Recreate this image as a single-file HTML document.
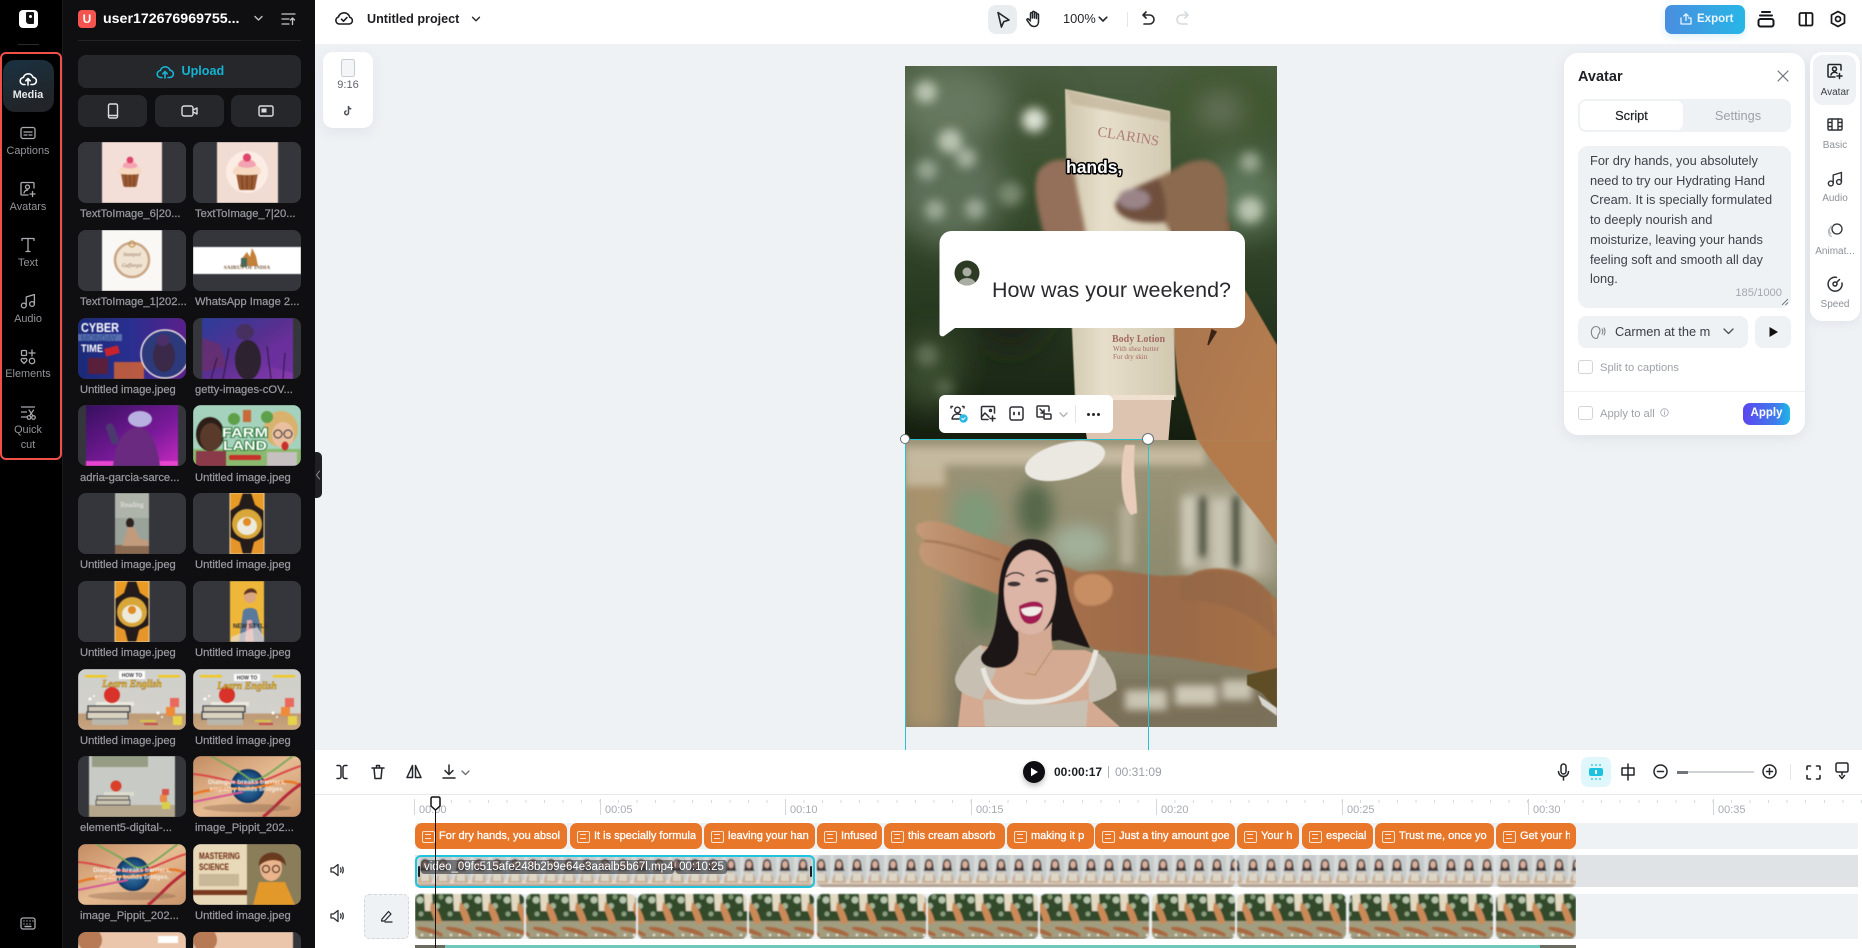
<!DOCTYPE html>
<html><head><meta charset="utf-8"><title>Editor</title>
<style>
*{box-sizing:border-box}
html,body{margin:0;padding:0;width:1862px;height:948px;overflow:hidden;background:#fff;font-family:"Liberation Sans",sans-serif}
.a{position:absolute}
svg{display:block;overflow:visible}
.i{position:absolute;fill:none;stroke:currentColor;stroke-width:1.6;stroke-linecap:round;stroke-linejoin:round}
.rl{position:absolute;left:0;width:56px;text-align:center;font-size:10.9px;color:#93959a;line-height:14px;white-space:nowrap}
.tile{position:absolute;width:108px;height:61px;border-radius:8px;background:#35363b;overflow:hidden}
.tile svg{width:108px;height:61px;filter:blur(.45px)}
.lb{position:absolute;font-size:11.2px;font-weight:500;color:#96979c;line-height:14px;white-space:nowrap;-webkit-text-stroke:.25px #96979c}
.cap{position:absolute;top:823px;height:26px;background:#e8772a;border-radius:7px;overflow:hidden;color:#fff;font-size:11px;line-height:26px;padding-left:24px;white-space:nowrap;-webkit-text-stroke:.3px #fff}
.cap:before{content:"";position:absolute;left:7px;top:8px;width:11px;height:10px;border:1.2px solid #fde3cf;border-radius:2px}
.cap:after{content:"";position:absolute;left:10px;top:11px;width:6px;height:3px;border-top:1px solid #fde3cf;border-bottom:1px solid #fde3cf}
.cap span{display:block;overflow:hidden;height:26px}
.tm{position:absolute;top:803px;font-size:11px;color:#a6abb2;line-height:14px}
.mj{position:absolute;top:799px;width:1px;height:16px;background:#d4d7db}
.rr{position:absolute;left:1810px;width:50px;text-align:center;font-size:10px;color:#8d9198;line-height:12px;white-space:nowrap}
.ln{position:absolute;left:1590px;font-size:12.8px;color:#3d424a;line-height:20px;white-space:nowrap}
</style></head><body>

<!-- canvas -->
<div class="a" style="left:315px;top:44px;width:1547px;height:706px;background:#eff2f5"></div>

<!-- top bar -->
<div class="a" style="left:315px;top:0;width:1547px;height:44px;background:#fff"></div>
<svg class="i" style="left:334px;top:8px;color:#1a1c20" width="20" height="20" viewBox="0 0 20 20"><path d="M5 16h10a3.4 3.4 0 0 0 .8-6.7A5.9 5.9 0 0 0 4.400 9 3.600 3.600 0 0 0 5 16Z"/><path d="m7.500 11.200 2 2 3.400-3.600"/></svg>
<div class="a" style="left:367px;top:11px;font-size:12.6px;font-weight:700;color:#1c1e22;line-height:16px;white-space:nowrap">Untitled project</div>
<svg class="i" style="left:471px;top:16px;color:#2a2c30;stroke-width:1.400" width="10" height="7" viewBox="0 0 10 7"><path d="m1.500 1.200 3.500 3.600 3.500-3.600"/></svg>

<div class="a" style="left:988px;top:5px;width:29px;height:29px;background:#e9edf0;border-radius:8px"></div>
<svg class="i" style="left:994px;top:10px;color:#22252a" width="18" height="20" viewBox="0 0 18 20"><path d="M4 2.500 15 10l-5.200 1.600L7.400 17 4 2.500Z"/></svg>
<svg class="i" style="left:1025px;top:10px;color:#22252a;stroke-width:1.500" width="18" height="18" viewBox="0 0 18 18"><path d="M5.500 9V3.600a1 1 0 0 1 2 0V8m0-5.600a1 1 0 0 1 2 0V8m0-4.600a1 1 0 0 1 2 0V8.500m0-3.600a1 1 0 0 1 2 0v6.600c0 3-1.800 5-4.500 5-2.600 0-3.800-1.300-5-3.600L2 10.200c-.5-1 .7-1.900 1.600-1l1.900 1.800"/></svg>
<div class="a" style="left:1063px;top:11px;font-size:12.800px;color:#23262b;line-height:16px">100%</div>
<svg class="i" style="left:1098px;top:16px;color:#23262b" width="10" height="7" viewBox="0 0 10 7"><path d="m1.200 1.200 3.800 3.800 3.800-3.800"/></svg>
<div class="a" style="left:1127px;top:12px;width:1px;height:15px;background:#e3e6e9"></div>
<svg class="i" style="left:1140px;top:10px;color:#23262b" width="16" height="18" viewBox="0 0 16 18"><path d="M6 2 3 5l3 3M3 5h6.500a4.500 4.500 0 0 1 0 9H4"/></svg>
<svg class="i" style="left:1175px;top:10px;color:#d5dade" width="16" height="18" viewBox="0 0 16 18"><path d="m10 2 3 3-3 3m3-3H6.500a4.500 4.500 0 0 0 0 9H12"/></svg>

<div class="a" style="left:1665px;top:5px;width:80px;height:29px;border-radius:7px;background:linear-gradient(90deg,#4a8ee0,#27b6e6);box-shadow:0 3px 8px rgba(60,170,230,.18)"></div>
<svg class="i" style="left:1679px;top:12px;color:#e6f4fd;stroke-width:1.300" width="14" height="14" viewBox="0 0 14 14"><path d="M2 6v6h10V6H9.500M7 8.500V2M4.800 4 7 1.800 9.200 4"/></svg>
<div class="a" style="left:1697px;top:11px;font-size:11.500px;font-weight:700;color:#eaf6fe;line-height:16px">Export</div>
<svg class="i" style="left:1757px;top:10px;color:#15171a;stroke-width:2" width="18" height="18" viewBox="0 0 18 18"><path d="M5 2h8M3 5.500h12"/><rect x="1.500" y="9" width="15" height="7.500" rx="2"/></svg>
<svg class="i" style="left:1798px;top:11px;color:#15171a;stroke-width:1.800" width="16" height="16" viewBox="0 0 16 16"><rect x="1.500" y="2" width="13" height="12.500" rx="1.500"/><path d="M8 2v12.500"/></svg>
<svg class="i" style="left:1830px;top:10px;color:#15171a;stroke-width:1.700" width="16" height="18" viewBox="0 0 16 18"><path d="M8 1.500 14.500 5v8L8 16.500 1.500 13V5L8 1.500Z"/><circle cx="8" cy="9" r="2.500"/></svg>

<!-- format card -->
<div class="a" style="left:323px;top:52px;width:50px;height:76px;background:#fff;border-radius:10px;box-shadow:0 4px 14px rgba(60,70,90,.08)"></div>
<div class="a" style="left:341px;top:59px;width:14px;height:18px;border:1.500px solid #c6ccd3;border-radius:2.500px;background:#f3f5f7"></div>
<div class="a" style="left:323px;top:79px;width:50px;text-align:center;font-size:11px;color:#5f646c;line-height:13px">9:16</div>
<svg class="a" style="left:342px;top:105px" width="12" height="12" viewBox="0 0 12 12"><path d="M6.500 1v6.800a1.900 1.900 0 1 1-1.900-1.900M6.500 1.200c.2 1.600 1.300 2.600 2.800 2.800" fill="none" stroke="#4e525a" stroke-width="1.500"/></svg>

<!-- video -->
<svg class="a" style="left:905px;top:66px;overflow:hidden" width="372" height="661" viewBox="905 66 372 661">
<defs>
<filter id="b12" x="-40%" y="-40%" width="180%" height="180%"><feGaussianBlur stdDeviation="14"/></filter>
<filter id="b8" x="-30%" y="-30%" width="160%" height="160%"><feGaussianBlur stdDeviation="8"/></filter>
<filter id="b5" x="-50%" y="-50%" width="200%" height="200%"><feGaussianBlur stdDeviation="5"/></filter>
<filter id="b4" x="-30%" y="-30%" width="160%" height="160%"><feGaussianBlur stdDeviation="4"/></filter>
<filter id="b2" x="-20%" y="-20%" width="140%" height="140%"><feGaussianBlur stdDeviation="2.500"/></filter>
<filter id="b1" x="-10%" y="-10%" width="120%" height="120%"><feGaussianBlur stdDeviation="1"/></filter>
<filter id="b0" x="-5%" y="-5%" width="110%" height="110%"><feGaussianBlur stdDeviation=".6"/></filter>
<linearGradient id="gtop" x1="0" y1="0" x2="0" y2="1"><stop offset="0" stop-color="#4b5e42"/><stop offset=".3" stop-color="#3b5030"/><stop offset=".65" stop-color="#263820"/><stop offset="1" stop-color="#141c0e"/></linearGradient>
<linearGradient id="tube" x1="0" y1="0" x2="1" y2="0"><stop offset="0" stop-color="#cfc6ac"/><stop offset=".35" stop-color="#e6dfca"/><stop offset="1" stop-color="#d2c8b0"/></linearGradient>
<linearGradient id="arm" x1="0" y1="0" x2="1" y2="1"><stop offset="0" stop-color="#a87650"/><stop offset="1" stop-color="#bb7f4e"/></linearGradient>
<linearGradient id="low" x1="0" y1="0" x2="0" y2="1"><stop offset="0" stop-color="#9c9478"/><stop offset=".5" stop-color="#8c8a6e"/><stop offset="1" stop-color="#7f7862"/></linearGradient>
<linearGradient id="palm" x1="0" y1="0" x2="1" y2="0"><stop offset="0" stop-color="#c49a78"/><stop offset=".35" stop-color="#a8704c"/><stop offset=".7" stop-color="#9a6a48"/><stop offset="1" stop-color="#a67045"/></linearGradient>
</defs>
<rect x="905" y="66" width="372" height="380" fill="url(#gtop)"/>
<g filter="url(#b12)">
<ellipse cx="950" cy="105" rx="55" ry="40" fill="#66785e"/><ellipse cx="1225" cy="105" rx="60" ry="40" fill="#40562f"/><ellipse cx="1245" cy="195" rx="40" ry="40" fill="#5d7658"/><ellipse cx="950" cy="190" rx="55" ry="55" fill="#5d7059"/><ellipse cx="930" cy="370" rx="30" ry="40" fill="#3b4e2e"/><ellipse cx="1040" cy="110" rx="30" ry="30" fill="#435434"/>
<ellipse cx="1010" cy="300" rx="40" ry="50" fill="#1a2414"/><ellipse cx="1220" cy="110" rx="20" ry="12" fill="#75806a"/>
</g>
<g filter="url(#b5)" fill="#b9c4b0">
<circle cx="926" cy="92" r="11"/><circle cx="1034" cy="120" r="12" fill="#dce2d4"/><circle cx="950" cy="141" r="12"/><circle cx="966" cy="158" r="10" opacity=".8"/><circle cx="927" cy="170" r="10" opacity=".65"/><circle cx="935" cy="210" r="10" opacity=".7"/><circle cx="975" cy="209" r="10" opacity=".7"/><circle cx="1011" cy="194" r="12" opacity=".45"/><circle cx="1250" cy="162" r="10" opacity=".7"/><circle cx="1250" cy="210" r="13"/><circle cx="1215" cy="205" r="10" opacity=".35"/><circle cx="927" cy="355" r="11" opacity=".3"/><circle cx="945" cy="388" r="9" opacity=".25"/>
</g>
<!-- arm upper -->
<path d="M1172 318 1245 290 1277 345V545L1240 500 1198 445 1178 380Z" fill="url(#arm)" filter="url(#b0)"/>
<path d="M1212 330 1208 345 1216 332Z" fill="#3a2416" stroke="#3a2416" stroke-width="1.500"/>
<rect x="1175" y="222" width="55" height="14" fill="#7c5a42" filter="url(#b1)"/>
<!-- tube -->
<path d="M1065 89 1170 111 1172 250 1176 397 1075 397 1068 240Z" fill="url(#tube)" filter="url(#b0)"/>
<path d="M1066 90 1170 112 1170 122 1072 104Z" fill="#c2b49a" opacity=".7" filter="url(#b1)"/>
<path d="M1080 397H1172L1168 445H1088Z" fill="#dcc4b0"/>
<rect x="1077" y="395" width="97" height="5" fill="#efe0cf"/>
<text x="1097" y="136" font-family="Liberation Serif,serif" font-size="14.500" fill="#b07e78" transform="rotate(9 1097 136)">CLARINS</text>
<text x="1112" y="342" font-family="Liberation Serif,serif" font-size="10" font-weight="700" fill="#a36a62">Body Lotion</text>
<text x="1113" y="351" font-family="Liberation Serif,serif" font-size="7" fill="#a36a62">With shea butter</text>
<text x="1113" y="359" font-family="Liberation Serif,serif" font-size="7" fill="#a36a62">For dry skin</text>
<!-- upper hand -->
<g filter="url(#b2)">
<path d="M1038 172C1046 160 1062 157 1073 162 1078 200 1082 210 1086 235H1044C1038 210 1032 190 1038 172Z" fill="#94705a"/>
<path d="M1115 205C1118 190 1160 180 1182 165 1205 155 1220 160 1226 182 1228 200 1226 220 1228 235H1172L1165 222C1145 224 1118 222 1115 205Z" fill="#8c6a50"/>
<path d="M1115 205C1118 192 1140 186 1158 178 1165 190 1168 210 1165 222 1145 224 1118 222 1115 205Z" fill="#6f4f3e"/>
<ellipse cx="1134" cy="199" rx="16" ry="10" fill="#9a8488"/>
</g>
<!-- lower -->
<rect x="905" y="440" width="372" height="287" fill="url(#low)"/>
<g filter="url(#b8)">
<rect x="905" y="470" width="40" height="260" fill="#a8926c"/>
<ellipse cx="975" cy="520" rx="24" ry="30" fill="#7f9a78"/><ellipse cx="1035" cy="510" rx="18" ry="28" fill="#55684a"/>
<ellipse cx="1080" cy="545" rx="28" ry="20" fill="#a2b09a"/><ellipse cx="985" cy="600" rx="18" ry="35" fill="#6b7a58"/>
<rect x="1185" y="490" width="90" height="90" fill="#b2ad98"/>
<rect x="960" y="680" width="320" height="50" fill="#7a7058"/>
</g>
<g filter="url(#b4)">
<rect x="905" y="447" width="300" height="18" fill="#c5baa0"/>
<rect x="905" y="464" width="40" height="22" fill="#c4b79c"/>
<rect x="1182" y="497" width="14" height="70" fill="#cbc7b5"/><rect x="1212" y="500" width="16" height="72" fill="#c8c4b2"/><rect x="1244" y="500" width="14" height="72" fill="#c5c2ae"/>
<rect x="1125" y="690" width="42" height="20" fill="#c9c4b2"/><rect x="1175" y="685" width="42" height="20" fill="#cdc8b6"/><rect x="1222" y="680" width="30" height="20" fill="#c9c4b2"/>
<rect x="1120" y="505" width="14" height="60" fill="#b4ae96"/>
<rect x="1198" y="497" width="8" height="60" fill="#35402c"/><rect x="1232" y="497" width="8" height="70" fill="#35402c"/>
</g>
<!-- arm lower upper corner -->
<path d="M1198 440H1277V545C1255 510 1215 470 1198 440Z" fill="#b37a4c" filter="url(#b0)"/>
<!-- lid drip -->
<ellipse cx="1065" cy="461" rx="41" ry="18" transform="rotate(-14 1065 461)" fill="#ebe8e2" filter="url(#b0)"/>
<path d="M1125 445H1135C1132 470 1137 495 1137 513L1131 515C1122 505 1118 478 1125 445Z" fill="#e9cdbb" filter="url(#b0)"/>
<!-- lower hand -->
<g filter="url(#b1)">
<path d="M918 524C932 518 945 522 968 532L1020 550 1080 572 1115 570 1160 576 1190 575C1205 565 1240 565 1262 585L1277 600V676L1240 668 1180 658 1120 652 1095 650 1060 620 1040 590 1000 595 960 580 926 565C918 558 916 546 925 540 915 534 914 528 918 524Z" fill="url(#palm)"/>
<path d="M924 541C945 541 975 552 1000 560" stroke="#8d6246" stroke-width="1.500" fill="none"/>
<path d="M1075 582C1085 570 1105 572 1112 585 1116 600 1100 608 1085 605 1075 602 1072 592 1075 582Z" fill="#c88e64"/>
<path d="M1180 580C1210 565 1245 568 1270 592L1277 640C1250 610 1215 600 1180 600Z" fill="#8a6248" opacity=".35"/>
</g>
<path d="M1247 675 1277 668V710L1262 693 1247 685Z" fill="#5e4e28" filter="url(#b0)"/>
<path d="M1258 695 1277 708V716L1262 705Z" fill="#d8d6d0" filter="url(#b0)"/>
<!-- woman -->
<g filter="url(#b0)">
<path d="M961 665 980 645 1000 650 1085 650 1105 658 1117 690 1092 702 1120 727H958L962 690Z" fill="#d4ab92"/>
<path d="M980 645C965 655 955 672 955 680 956 692 965 695 982 700 985 690 992 682 996 670 990 660 985 650 980 645Z" fill="#c7bfb2"/>
<path d="M1094 650C1110 660 1118 680 1116 690 1108 698 1100 700 1090 703 1087 690 1090 660 1094 650Z" fill="#c7bfb2"/>
<path d="M983 700 985 727H1086L1088 700C1070 702 1050 706 1030 704 1010 703 995 698 983 700Z" fill="#c8c1b3"/>
<path d="M983 668C988 690 998 702 1030 702 1065 702 1088 690 1096 650" fill="none" stroke="#e8e6df" stroke-width="5"/>
<path d="M1030 539C1010 540 1001 562 999 588 997 618 996 640 984 652 976 660 985 668 995 668 1012 668 1018 658 1020 645L1060 640 1090 648C1080 625 1070 608 1067 585 1062 552 1050 539 1030 539Z" fill="#1c1719"/>
<path d="M1004 592C1004 568 1014 552 1030 550 1046 552 1057 568 1056 590 1056 615 1046 636 1030 637 1014 636 1004 615 1004 592Z" fill="#dcb5a6"/>
<path d="M1018 628C1020 650 1018 660 1010 665L1060 665C1052 655 1050 640 1052 622 1045 634 1025 640 1018 628Z" fill="#d3a994"/>
<path d="M1019 606C1030 600 1040 600 1043 606 1043 620 1036 624 1030 624 1024 624 1019 618 1019 606Z" fill="#a31f52"/>
<path d="M1021 609C1030 606 1038 606 1042 608 1040 615 1034 616 1030 616 1026 616 1022 615 1021 609Z" fill="#f2ece8"/>
<ellipse cx="1014" cy="584" rx="6.500" ry="2.500" fill="#3d3238"/><ellipse cx="1042" cy="580" rx="6.500" ry="2.500" fill="#3d3238"/>
<path d="M1006 577C1012 571 1020 572 1024 576M1036 574C1042 569 1050 570 1054 574" fill="none" stroke="#2e2426" stroke-width="1.600"/>
<path d="M1025 673 1035 675 1055 645" fill="none" stroke="#a98a50" stroke-width=".8"/>
</g>
<!-- caption -->
<text x="1066" y="173" font-family="Liberation Sans,sans-serif" font-weight="700" font-size="17.500" fill="#fff" stroke="#000" stroke-width="3" paint-order="stroke" stroke-linejoin="round">hands,</text>
</svg>

<!-- bubble -->
<svg class="a" style="left:930px;top:225px" width="320" height="120" viewBox="930 225 320 120">
<path d="M952 231H1233a12 12 0 0 1 12 12V316a12 12 0 0 1-12 12H955L944 336a3 3 0 0 1-4.500-2.500L939.500 243a12 12 0 0 1 12.500-12Z" fill="#fff"/>
<clipPath id="cc"><circle cx="967" cy="273" r="12.500"/></clipPath>
<circle cx="967" cy="273" r="12.500" fill="#2d3a24"/>
<g clip-path="url(#cc)"><circle cx="967" cy="272" r="4.500" fill="#a9ada2"/><ellipse cx="967" cy="285" rx="9" ry="7" fill="#a9ada2"/></g>
<text x="992" y="297" font-family="Liberation Sans,sans-serif" font-size="21.500" fill="#2a2a2e">How was your weekend?</text>
</svg>

<!-- selection -->
<div class="a" style="left:905px;top:439px;width:244px;height:1px;background:#29c0d0"></div>
<div class="a" style="left:904.500px;top:439px;width:1px;height:311px;background:#29c0d0"></div>
<div class="a" style="left:1147.500px;top:439px;width:1px;height:311px;background:#29c0d0"></div>
<div class="a" style="left:900px;top:434px;width:10px;height:10px;border-radius:50%;background:#fff;border:1px solid #6a7176"></div>
<div class="a" style="left:1142px;top:433px;width:12px;height:12px;border-radius:50%;background:#fff;border:1px solid #6a7176"></div>

<!-- floating toolbar -->
<div class="a" style="left:939px;top:395px;width:174px;height:38px;background:#fff;border-radius:6px"></div>
<svg class="i" style="left:950px;top:405px;color:#2b2e33;stroke-width:1.400" width="18" height="18" viewBox="0 0 18 18"><circle cx="7.500" cy="5" r="2.800"/><path d="M2 14c.5-3.500 3-5 5.500-5s3.500.7 4.500 2M2 14h7M1 3v-1.500h1.500M14 3V1.500h-1.500"/><circle cx="13.500" cy="13.500" r="3.500" fill="#29b8e6" stroke="#29b8e6"/><path d="m11.800 13.500 1.300 1.200 2-2" stroke="#fff" stroke-width="1"/></svg>
<svg class="i" style="left:980px;top:405px;color:#2b2e33;stroke-width:1.500" width="17" height="17" viewBox="0 0 17 17"><path d="M14.500 8V2.500a1 1 0 0 0-1-1h-11a1 1 0 0 0-1 1v11a1 1 0 0 0 1 1H8"/><circle cx="10.500" cy="5.500" r="1"/><path d="m1.500 12 3.500-4 4 4M12.500 11v5M10 13.500h5"/></svg>
<svg class="i" style="left:1009px;top:406px;color:#2b2e33;stroke-width:1.500" width="15" height="15" viewBox="0 0 15 15"><rect x="1" y="1" width="13" height="13" rx="2"/><path d="M5 6.500v2M10 6.500v2" stroke-width="1.800"/></svg>
<svg class="i" style="left:1036px;top:405px;color:#2b2e33;stroke-width:1.500" width="16" height="16" viewBox="0 0 16 16"><path d="M7 12H2a1 1 0 0 1-1-1V2a1 1 0 0 1 1-1h10a1 1 0 0 1 1 1v4"/><path d="m4 4 4 4M8 5v3H5"/><rect x="8" y="9" width="7" height="5" rx="1"/></svg>
<svg class="i" style="left:1059px;top:412px;color:#aab0b6;stroke-width:1.300" width="9" height="6" viewBox="0 0 9 6"><path d="m1 1 3.500 3.500L8 1"/></svg>
<div class="a" style="left:1075px;top:405px;width:1px;height:18px;background:#e4e6e9"></div>
<div class="a" style="left:1087px;top:413px;width:3px;height:3px;border-radius:50%;background:#26282c;box-shadow:5px 0 0 #26282c,10px 0 0 #26282c"></div>

<!-- avatar panel -->
<div class="a" style="left:1564px;top:53px;width:241px;height:382px;background:#fff;border-radius:14px;box-shadow:0 3px 14px rgba(70,80,100,.1)"></div>
<div class="a" style="left:1578px;top:68px;font-size:14.500px;font-weight:700;color:#1d2025;line-height:18px">Avatar</div>
<svg class="i" style="left:1777px;top:70px;color:#6f747b;stroke-width:1.200" width="12" height="12" viewBox="0 0 12 12"><path d="m1 1 10 10M11 1 1 11"/></svg>
<div class="a" style="left:1578px;top:99px;width:213px;height:33px;background:#eff2f5;border-radius:8px"></div>
<div class="a" style="left:1580px;top:101px;width:103px;height:29px;background:#fff;border-radius:6px"></div>
<div class="a" style="left:1580px;top:108px;width:103px;text-align:center;font-size:12.800px;font-weight:500;color:#1d2025;line-height:16px;-webkit-text-stroke:.2px #1d2025">Script</div>
<div class="a" style="left:1685px;top:108px;width:106px;text-align:center;font-size:12.800px;color:#9da2a9;line-height:16px">Settings</div>
<div class="a" style="left:1578px;top:146px;width:213px;height:162px;background:#eff2f5;border-radius:10px"></div>
<div class="ln" style="top:151px">For dry hands, you absolutely</div>
<div class="ln" style="top:171px">need to try our Hydrating Hand</div>
<div class="ln" style="top:190px">Cream. It is specially formulated</div>
<div class="ln" style="top:210px">to deeply nourish and</div>
<div class="ln" style="top:230px">moisturize, leaving your hands</div>
<div class="ln" style="top:250px">feeling soft and smooth all day</div>
<div class="ln" style="top:269px">long.</div>
<div class="a" style="left:1730px;top:286px;width:52px;text-align:right;font-size:11.200px;color:#a3a8ae;line-height:14px">185/1000</div>
<svg class="a" style="left:1781px;top:298px" width="8" height="8" viewBox="0 0 8 8"><path d="M1 7 7 1M4.500 7 7 4.500" stroke="#555a60" stroke-width=".8"/></svg>
<div class="a" style="left:1578px;top:316px;width:170px;height:32px;background:#eff2f5;border-radius:8px"></div>
<svg class="i" style="left:1590px;top:324px;color:#7d8289;stroke-width:1.100" width="16" height="16" viewBox="0 0 16 16"><path d="M3 13c-1.500-2-2-4-1.500-6.500C2 4 4 2.500 6 2.500s4 1.500 4 4.500c0 2.500-2 3-2 4.500 0 1.500-.5 3-2 3s-2-.5-3-1.500Z"/><path d="M12 5c1 1 1 4 0 5M14 4c1.300 1.700 1.300 5.300 0 7"/></svg>
<div class="a" style="left:1615px;top:324px;font-size:12.800px;color:#3a3f46;line-height:16px;white-space:nowrap">Carmen at the m</div>
<svg class="i" style="left:1723px;top:328px;color:#4a4f56;stroke-width:1.300" width="11" height="7" viewBox="0 0 11 7"><path d="m1 1 4.500 4.500L10 1"/></svg>
<div class="a" style="left:1755px;top:316px;width:36px;height:32px;background:#eff2f5;border-radius:8px"></div>
<svg class="a" style="left:1768px;top:326px" width="11" height="12" viewBox="0 0 11 12"><path d="M1.500 1 10 6l-8.500 5Z" fill="#111"/></svg>
<div class="a" style="left:1578px;top:360px;width:15px;height:14px;border:1px solid #d2d6db;border-radius:3px;background:#fff"></div>
<div class="a" style="left:1600px;top:361px;font-size:11.200px;color:#9ea3a9;line-height:14px;white-space:nowrap">Split to captions</div>
<div class="a" style="left:1564px;top:391px;width:241px;height:1px;background:#eef0f2"></div>
<div class="a" style="left:1578px;top:406px;width:15px;height:14px;border:1px solid #d2d6db;border-radius:3px;background:#fff"></div>
<div class="a" style="left:1600px;top:407px;font-size:11.200px;color:#9ea3a9;line-height:14px;white-space:nowrap">Apply to all</div>
<svg class="i" style="left:1660px;top:408px;color:#a8adb3;stroke-width:.9" width="9" height="9" viewBox="0 0 9 9"><circle cx="4.500" cy="4.500" r="3.800"/><path d="M4.500 4v2.500M4.500 2.500v.3"/></svg>
<div class="a" style="left:1743px;top:403px;width:47px;height:22px;border-radius:7px;background:linear-gradient(90deg,#5b46ee,#3f7cec 70%,#1cb8e6);color:#fff;font-size:11.500px;font-weight:700;text-align:center;line-height:20px">Apply</div>

<!-- right rail -->
<div class="a" style="left:1810px;top:52px;width:50px;height:269px;background:#fff;border-radius:12px;box-shadow:0 3px 10px rgba(70,80,100,.08)"></div>
<div class="a" style="left:1813px;top:55px;width:43px;height:50px;background:#eff2f5;border-radius:10px"></div>
<svg class="i" style="left:1827px;top:63px;color:#1f2227;stroke-width:1.500" width="16" height="16" viewBox="0 0 16 16"><path d="M14 7V2.500a1 1 0 0 0-1-1H2a1 1 0 0 0-1 1V13a1 1 0 0 0 1 1h6"/><circle cx="7.500" cy="6" r="2"/><path d="M4 12c.5-2 2-2.800 3.500-2.800 1.200 0 2 .3 2.500 1M12.500 10.500v5M10 13h5"/></svg>
<div class="rr" style="top:87px;color:#3b3f45">Avatar</div>
<svg class="i" style="left:1827px;top:118px;color:#2d3035;stroke-width:1.400" width="16" height="14" viewBox="0 0 16 14"><rect x="1" y="1" width="14" height="11" rx="1"/><path d="M5 1v11M11 1v11M1 4.500h4M1 8.500h4M11 4.500h4M11 8.500h4"/></svg>
<div class="rr" style="top:140px">Basic</div>
<svg class="i" style="left:1827px;top:171px;color:#2d3035;stroke-width:1.400" width="16" height="16" viewBox="0 0 16 16"><circle cx="3.800" cy="12.500" r="2.400"/><circle cx="12" cy="11" r="2.400"/><path d="M6.200 12.500V4l8.200-2.500V11"/></svg>
<div class="rr" style="top:193px">Audio</div>
<svg class="i" style="left:1826px;top:222px;color:#2d3035;stroke-width:1.300" width="18" height="18" viewBox="0 0 18 18"><circle cx="11" cy="7" r="5" fill="#fff"/><path d="M6.500 3.700a5 5 0 0 0-1.800 8M4.500 5.500a5.500 5.500 0 0 0 .8 9" stroke="#b8bcc1"/></svg>
<div class="rr" style="top:246px">Animat...</div>
<svg class="i" style="left:1827px;top:276px;color:#2d3035;stroke-width:1.500" width="16" height="16" viewBox="0 0 16 16"><path d="M9.500 1.300A7 7 0 1 0 15 7"/><circle cx="8" cy="8" r="2"/><path d="m9.500 6.500 3-3"/></svg>
<div class="rr" style="top:299px">Speed</div>

<!-- left rail -->
<div class="a" style="left:0;top:0;width:62px;height:948px;background:#000"></div>
<div class="a" style="left:19px;top:10px;width:19px;height:18px;background:#fff;border-radius:4px"></div>
<div class="a" style="left:26px;top:12px;width:8px;height:12px;background:#111;border-radius:1px 1px 1px 3px"></div>
<div class="a" style="left:29px;top:15px;width:3px;height:3px;background:#fff;border-radius:50%"></div>
<div class="a" style="left:18px;top:44px;width:21px;height:1px;background:#2a2b2e"></div>
<div class="a" style="left:3px;top:60px;width:51px;height:52px;border-radius:12px;background:linear-gradient(160deg,#1a3242,#212428 80%)"></div>
<svg class="i" style="left:19px;top:70px;color:#fff;stroke-width:1.600" width="18" height="16" viewBox="0 0 18 16"><path d="M6 14.500H5a3.500 3.500 0 0 1-.6-7 5 5 0 0 1 9.600-.2 3.500 3.500 0 0 1-.4 7.200H12M9 15V9M6.800 10.800 9 8.500l2.200 2.300"/></svg>
<div class="rl" style="top:88px;color:#e8e9ea;font-weight:700;font-size:10.800px">Media</div>
<svg class="i" style="left:20px;top:126px;color:#a9abb0;stroke-width:1.300" width="16" height="14" viewBox="0 0 16 14"><rect x="1" y="1.500" width="14" height="11" rx="2"/><path d="M4 6h8M4 9h3M9 9h3"/></svg>
<div class="rl" style="top:144px">Captions</div>
<svg class="i" style="left:20px;top:181px;color:#a9abb0;stroke-width:1.300" width="16" height="16" viewBox="0 0 16 16"><path d="M14 7V2.500a1 1 0 0 0-1-1H2a1 1 0 0 0-1 1V13a1 1 0 0 0 1 1h6"/><circle cx="7.500" cy="6" r="2"/><path d="M4 12c.5-2 2-2.800 3.500-2.800M12.500 10.500v5M10 13h5"/></svg>
<div class="rl" style="top:200px">Avatars</div>
<svg class="i" style="left:20px;top:237px;color:#a9abb0;stroke-width:1.300" width="16" height="16" viewBox="0 0 16 16"><path d="M2 3.500V1.500h12v2M8 1.500v13M6 14.500h4"/></svg>
<div class="rl" style="top:256px">Text</div>
<svg class="i" style="left:20px;top:293px;color:#a9abb0;stroke-width:1.300" width="16" height="16" viewBox="0 0 16 16"><circle cx="3.800" cy="12.500" r="2.400"/><circle cx="12" cy="11" r="2.400"/><path d="M6.200 12.500V4l8.200-2.500V11"/></svg>
<div class="rl" style="top:312px">Audio</div>
<svg class="i" style="left:20px;top:349px;color:#a9abb0;stroke-width:1.300" width="16" height="16" viewBox="0 0 16 16"><rect x="1.500" y="1.500" width="5" height="5" rx="1"/><path d="M12 1v6M9 4h6M4 14.500 1.500 12a1.600 1.600 0 0 1 2.500-2 1.600 1.600 0 0 1 2.500 2L4 14.500Z"/><circle cx="12" cy="12" r="2.700"/></svg>
<div class="rl" style="top:367px">Elements</div>
<svg class="i" style="left:20px;top:405px;color:#a9abb0;stroke-width:1.200" width="16" height="16" viewBox="0 0 16 16"><path d="M1.500 2h13M1.500 7h5M1.500 12h5"/><circle cx="9" cy="12.500" r="1.800"/><circle cx="13.500" cy="12.500" r="1.800"/><path d="m9.500 11 4-6M13 11 9 5"/></svg>
<div class="rl" style="top:423px">Quick</div>
<div class="rl" style="top:438px">cut</div>
<div class="a" style="left:0;top:52px;width:62px;height:408px;border:2px solid #f04f4a;border-radius:6px"></div>
<svg class="i" style="left:20px;top:917px;color:#a9abb0;stroke-width:1.300" width="16" height="13" viewBox="0 0 16 13"><rect x="1" y="1" width="14" height="11" rx="2"/><path d="M4 4h0M7 4h0M10 4h0M13 4h0M4 7h0M7 7h0M10 7h0M5 9.500h6" stroke-width="1.400"/></svg>

<!-- panel -->
<div class="a" style="left:62px;top:0;width:253px;height:948px;background:#0f0f11;border-left:1px solid #1b1b1e"></div>
<div class="a" style="left:78px;top:10px;width:18px;height:18px;background:#f5534e;border-radius:4px;color:#fff;font-size:12px;font-weight:700;text-align:center;line-height:18px">U</div>
<div class="a" style="left:103px;top:10px;font-size:14.200px;font-weight:700;color:#fff;line-height:18px;white-space:nowrap">user172676969755...</div>
<svg class="i" style="left:254px;top:15px;color:#c6c7ca;stroke-width:1.300" width="9" height="7" viewBox="0 0 9 7"><path d="m1 1.500 3.500 3.500L8 1.500"/></svg>
<svg class="i" style="left:281px;top:12px;color:#c6c7ca;stroke-width:1.300" width="15" height="14" viewBox="0 0 15 14"><path d="M1 2h13M1 7h7M1 12h7M11.500 12.500V6M9.500 8l2-2 2 2"/></svg>
<div class="a" style="left:78px;top:40px;width:223px;height:1px;background:#222327"></div>
<div class="a" style="left:78px;top:55px;width:223px;height:33px;background:#26272b;border-radius:8px"></div>
<svg class="i" style="left:156px;top:63px;color:#17b5d5;stroke-width:1.600" width="18" height="16" viewBox="0 0 18 16"><path d="M6 14.500H5a3.500 3.500 0 0 1-.6-7 5 5 0 0 1 9.600-.2 3.500 3.500 0 0 1-.4 7.200H12M9 15V9M6.800 10.800 9 8.500l2.200 2.300"/></svg>
<div class="a" style="left:181.500px;top:62px;font-size:12.600px;font-weight:700;color:#14b4d4;line-height:18px">Upload</div>
<div class="a" style="left:78px;top:95px;width:69px;height:32px;background:#26272b;border-radius:8px"></div>
<div class="a" style="left:155px;top:95px;width:69px;height:32px;background:#26272b;border-radius:8px"></div>
<div class="a" style="left:231px;top:95px;width:70px;height:32px;background:#26272b;border-radius:8px"></div>
<svg class="i" style="left:107px;top:103px;color:#dcdde0;stroke-width:1.400" width="12" height="16" viewBox="0 0 12 16"><rect x="1.500" y="1" width="9" height="14" rx="1.500"/><path d="M1.500 12.500h9"/></svg>
<svg class="i" style="left:181px;top:105px;color:#dcdde0;stroke-width:1.400" width="17" height="12" viewBox="0 0 17 12"><rect x="1" y="1" width="11" height="10" rx="2"/><path d="m12 5 4-2v6l-4-2"/></svg>
<svg class="i" style="left:258px;top:105px;color:#dcdde0;stroke-width:1.400" width="16" height="12" viewBox="0 0 16 12"><rect x="1" y="1" width="14" height="10" rx="1.500"/><rect x="3.500" y="3.500" width="5" height="4" fill="#dcdde0" stroke="none"/></svg>

<!-- tiles -->
<svg width="0" height="0" class="a"><defs>
<symbol id="cup" viewBox="0 0 40 44" overflow="visible">
<path d="M8 24h24l-3 16a3 3 0 0 1-3 2H14a3 3 0 0 1-3-2Z" fill="#9a5a32"/><path d="M14 25l1 16M20 25v16M26 25l-1 16" stroke="#6f3d1f" fill="none"/>
<path d="M5 24c-2-5 2-8 5-9 0-5 5-8 10-8s10 3 10 8c3 1 7 4 5 9-5 2-25 2-30 0Z" fill="#f6d9c0"/>
<path d="M10 15c0-4 5-7 10-7s10 3 10 7c-6 3-14 3-20 0Z" fill="#f3a3b2"/>
<circle cx="20" cy="6" r="4.500" fill="#e0456b"/>
</symbol>
<symbol id="orange" viewBox="0 0 34 61" overflow="visible">
<rect width="34" height="61" fill="#241b1b"/><path d="M0 0h13L9 12 0 18Z" fill="#e89a24"/><path d="M34 0H21l4 12 9 6Z" fill="#e89a24"/><path d="M0 61V44l10 5 3 12Z" fill="#e5952a"/><path d="M34 61V44l-10 5-3 12Z" fill="#e5952a"/>
<circle cx="17" cy="31" r="15" fill="#d9a63a"/><ellipse cx="17" cy="33" rx="10" ry="9" fill="#eceadc"/><circle cx="17" cy="29" r="4" fill="#e28a24"/><rect width="34" height="61" fill="none" stroke="#f3d7a0" stroke-width="1"/>
</symbol>
<linearGradient id="lgw" x1="0" y1="0" x2="0" y2="1"><stop offset="0" stop-color="#cfd0cc"/><stop offset=".72" stop-color="#d3d1cb"/><stop offset=".74" stop-color="#bc9a76"/><stop offset="1" stop-color="#c9a680"/></linearGradient>
<linearGradient id="dlg" x1="0" y1="0" x2="1" y2="1"><stop offset="0" stop-color="#c48c62"/><stop offset=".5" stop-color="#e6bb92"/><stop offset="1" stop-color="#c8936a"/></linearGradient>
<radialGradient id="glb"><stop offset="0" stop-color="#3d7fa8"/><stop offset=".8" stop-color="#184a7c"/><stop offset="1" stop-color="#0e3058"/></radialGradient>
<symbol id="books" viewBox="0 0 108 61" overflow="visible">
<rect width="108" height="61" fill="url(#lgw)"/>
<rect x="18" y="33" width="38" height="4" fill="#eceade"/><rect x="10" y="37" width="42" height="6" fill="#cfc7b7" stroke="#3f4148" stroke-width="1.200"/><rect x="9" y="43" width="41" height="7" fill="#d9d2c1" stroke="#3f4148" stroke-width="1.200"/><rect x="14" y="50" width="36" height="6" fill="#b9b6ac"/>
<circle cx="34" cy="26" r="8" fill="#d8322a"/><circle cx="12" cy="30" r="1.500" fill="#fff"/><circle cx="16" cy="27" r="1" fill="#fff"/><circle cx="80" cy="44" r="1.500" fill="#fff"/><circle cx="84" cy="48" r="1" fill="#fff"/>
<rect x="92" y="29" width="9" height="9" fill="#e96a5c"/><rect x="88" y="38" width="9" height="9" fill="#ef8a3b"/><rect x="95" y="47" width="9" height="9" fill="#e7d34a"/>
<rect x="62" y="51" width="16" height="2" fill="#d8c34a"/><rect x="66" y="54" width="14" height="2" fill="#c64a4a"/>
</symbol>
<symbol id="dial" viewBox="0 0 108 61" overflow="visible">
<rect width="108" height="61" fill="url(#dlg)"/>
<circle cx="55" cy="30" r="17" fill="url(#glb)"/>
<path d="M0 18C25 20 40 28 55 28S90 15 108 10" stroke="#d94a4a" stroke-width="2" fill="none"/>
<path d="M0 38C25 30 45 34 60 32S95 20 108 30" stroke="#e87828" stroke-width="2.500" fill="none"/>
<path d="M0 46C20 42 30 40 50 36" stroke="#d65a98" stroke-width="2" fill="none"/>
<path d="M18 0C35 10 45 14 55 22S85 10 100 0" stroke="#7aa858" stroke-width="1.800" fill="none"/>
<path d="M108 28C90 40 82 52 70 61" stroke="#b82a3a" stroke-width="3" fill="none"/>
<ellipse cx="54" cy="52" rx="44" ry="4" fill="#7e5b46" opacity=".35"/>
</symbol>
</defs></svg>

<div class="tile" style="left:78px;top:142px"><svg viewBox="0 0 108 61"><rect x="24" width="60" height="61" fill="#f3dfd8"/><use href="#cup" x="37" y="11" width="30" height="38"/></svg></div>
<div class="lb" style="left:80px;top:207px">TextToImage_6|20...</div>
<div class="tile" style="left:193px;top:142px"><svg viewBox="0 0 108 61"><rect x="24" width="61" height="61" fill="#f1dcd4"/><circle cx="54" cy="30" r="21" fill="#fbece4"/><use href="#cup" x="36" y="10" width="36" height="40"/></svg></div>
<div class="lb" style="left:195px;top:207px">TextToImage_7|20...</div>

<div class="tile" style="left:78px;top:230px"><svg viewBox="0 0 108 61"><rect x="24" width="60" height="61" fill="#faf8f5"/><circle cx="54" cy="30" r="17" fill="#f1e3d2" stroke="#c9a585" stroke-width="2.500"/><circle cx="54" cy="14" r="3" fill="none" stroke="#c08a3a"/><text x="54" y="26" font-size="5" text-anchor="middle" fill="#8a6d55" font-family="Liberation Serif,serif" font-style="italic">Stamped</text><text x="54" y="37" font-size="5" text-anchor="middle" fill="#8a6d55" font-family="Liberation Serif,serif" font-style="italic">Gaffiergie</text></svg></div>
<div class="lb" style="left:80px;top:295px">TextToImage_1|202...</div>
<div class="tile" style="left:193px;top:230px"><svg viewBox="0 0 108 61"><rect y="17" width="108" height="27" fill="#fff"/><path d="M47 36l3-9 4-5 3 5 2-9 4 8 2 10Z" fill="#c5803a"/><rect x="48" y="28" width="6" height="9" fill="#476a5a"/><text x="54" y="39" font-size="5.500" text-anchor="middle" fill="#7a5a3a" font-family="Liberation Serif,serif" font-weight="700">SAIRUS OF INDIA</text></svg></div>
<div class="lb" style="left:195px;top:295px">WhatsApp Image 2...</div>

<div class="tile" style="left:78px;top:318px"><svg viewBox="0 0 108 61"><defs><linearGradient id="cy" x1="0" y1="0" x2="1" y2="0"><stop offset="0" stop-color="#1b2a78"/><stop offset=".5" stop-color="#2a2f90"/><stop offset="1" stop-color="#5b1f8a"/></linearGradient></defs><rect width="108" height="61" fill="url(#cy)"/><rect x="0" y="16" width="44" height="7" fill="#6f8cc0" opacity=".7"/><rect x="36" y="44" width="30" height="17" fill="#e8692a" opacity=".75"/><rect x="10" y="40" width="20" height="16" fill="#5a1f3a"/><circle cx="87" cy="36" r="24" fill="#2c3a7c" stroke="#f0dfe0" stroke-width="1.500"/><ellipse cx="86" cy="38" rx="11" ry="16" fill="#3a2948"/><ellipse cx="85" cy="22" rx="7" ry="6" fill="#4a2f6a"/><rect x="27" y="29" width="14" height="8" fill="#c8232c" transform="rotate(-15 34 33)"/><text x="3" y="14" font-size="12.500" font-weight="700" fill="#fff" font-family="Liberation Sans,sans-serif" textLength="38" lengthAdjust="spacingAndGlyphs">CYBER</text><text x="3" y="23" font-size="8" fill="#2c4a8e" font-family="Liberation Sans,sans-serif" textLength="36" lengthAdjust="spacingAndGlyphs">MONDAY</text><text x="3" y="34" font-size="11" font-weight="700" fill="#fff" font-family="Liberation Sans,sans-serif" textLength="22" lengthAdjust="spacingAndGlyphs">TIME</text></svg></div>
<div class="lb" style="left:80px;top:383px">Untitled image.jpeg</div>
<div class="tile" style="left:193px;top:318px"><svg viewBox="0 0 108 61"><defs><linearGradient id="pu" x1="0" y1="0" x2="1" y2="1"><stop offset="0" stop-color="#2a3d9a"/><stop offset=".5" stop-color="#5a2f90"/><stop offset="1" stop-color="#8a3ab0"/></linearGradient></defs><rect x="9" width="91" height="61" fill="url(#pu)"/><path d="M9 20l18 6 6 22-24 6Z" fill="#6a2e6c" opacity=".8"/><path d="M100 15 78 25l-6 22 28 8Z" fill="#6a2e9c" opacity=".7"/><ellipse cx="55" cy="42" rx="13" ry="20" fill="#2d2230"/><ellipse cx="52" cy="14" rx="9" ry="8" fill="#46305f"/><path d="M30 61 36 30M78 61 74 28M18 61 24 40M90 61 92 35" stroke="#2a1840" stroke-width="1"/></svg></div>
<div class="lb" style="left:195px;top:383px">getty-images-cOV...</div>

<div class="tile" style="left:78px;top:405px"><svg viewBox="0 0 108 61"><defs><linearGradient id="ad" x1="0" y1="0" x2="1" y2="1"><stop offset="0" stop-color="#35105e"/><stop offset=".6" stop-color="#7a1a9a"/><stop offset="1" stop-color="#c82ac0"/></linearGradient></defs><rect x="8" width="92" height="61" fill="url(#ad)"/><rect x="8" y="56" width="92" height="5" fill="#e844d0"/><path d="M35 61C38 35 45 25 60 22 75 24 80 45 82 61Z" fill="#6a2a80"/><ellipse cx="62" cy="14" rx="12" ry="8" fill="#b8b0e0"/><rect x="30" y="18" width="8" height="22" rx="4" fill="#4a3a70" transform="rotate(-20 34 28)"/></svg></div>
<div class="lb" style="left:80px;top:471px">adria-garcia-sarce...</div>
<div class="tile" style="left:193px;top:405px"><svg viewBox="0 0 108 61"><rect width="108" height="61" fill="#a4d2bc"/><rect y="44" width="108" height="17" fill="#8aba6e"/><ellipse cx="17" cy="29" rx="14" ry="17" fill="#2d1f18"/><ellipse cx="18" cy="32" rx="11" ry="14" fill="#5a3a2a"/><rect x="3" y="46" width="30" height="15" fill="#8a3a48"/><ellipse cx="88" cy="24" rx="17" ry="18" fill="#d9b26e"/><ellipse cx="90" cy="30" rx="11" ry="13" fill="#eac0a0"/><rect x="74" y="47" width="30" height="14" fill="#c6c0c0"/><circle cx="85" cy="29" r="4" fill="none" stroke="#333"/><circle cx="95" cy="29" r="4" fill="none" stroke="#333"/><ellipse cx="92" cy="41" rx="3.500" ry="4.500" fill="#c8312a"/><circle cx="41" cy="14" r="6" fill="#5ea04a"/><rect x="50" y="5" width="8" height="12" fill="#c86a3a"/><circle cx="74" cy="12" r="6" fill="#5ea04a"/><text x="52" y="32" text-anchor="middle" font-size="13" font-weight="700" fill="#fff" stroke="#2d7a3a" stroke-width="1.800" paint-order="stroke" font-family="Liberation Sans,sans-serif" textLength="46" lengthAdjust="spacingAndGlyphs">FARM</text><text x="52" y="45" text-anchor="middle" font-size="13" font-weight="700" fill="#fff" stroke="#2d7a3a" stroke-width="1.800" paint-order="stroke" font-family="Liberation Sans,sans-serif" textLength="44" lengthAdjust="spacingAndGlyphs">LAND</text><rect x="36" y="50" width="32" height="5" rx="2" fill="#c8312a"/></svg></div>
<div class="lb" style="left:195px;top:471px">Untitled image.jpeg</div>

<div class="tile" style="left:78px;top:493px"><svg viewBox="0 0 108 61"><rect x="37" width="34" height="61" fill="#9aa39a"/><rect x="37" y="0" width="34" height="25" fill="#aeb4a9"/><rect x="37" y="52" width="34" height="9" fill="#8a6a50"/><ellipse cx="52" cy="30" rx="4" ry="5" fill="#2d2420"/><path d="M46 47 50 34h6L62 46 71 48V53H44Z" fill="#c29a7c"/><text x="54" y="14" text-anchor="middle" font-size="7" fill="#eee" font-family="Liberation Serif,serif">Reading</text></svg></div>
<div class="lb" style="left:80px;top:558px">Untitled image.jpeg</div>
<div class="tile" style="left:193px;top:493px"><svg viewBox="0 0 108 61"><use href="#orange" x="37" y="0" width="34" height="61"/></svg></div>
<div class="lb" style="left:195px;top:558px">Untitled image.jpeg</div>

<div class="tile" style="left:78px;top:581px"><svg viewBox="0 0 108 61"><use href="#orange" x="37" y="0" width="34" height="61"/></svg></div>
<div class="lb" style="left:80px;top:646px">Untitled image.jpeg</div>
<div class="tile" style="left:193px;top:581px"><svg viewBox="0 0 108 61"><rect x="37" width="34" height="61" fill="#efb73a"/><path d="M46 61 50 30c2-4 12-4 14 0l7 31Z" fill="#5a7a9c"/><path d="M52 61l2-22h5l2 22Z" fill="#e8a8a8"/><circle cx="57" cy="16" r="6" fill="#d9a582"/><path d="M51 14c0-7 12-10 13-1-4-3-9-2-13 1Z" fill="#5a3320"/><path d="M38 56 64 46 71 55V61H38Z" fill="#e8dcd4" opacity=".7"/><text x="40" y="47" font-size="6" font-weight="700" fill="#2a2a2a" font-family="Liberation Sans,sans-serif">NEW STYLE</text></svg></div>
<div class="lb" style="left:195px;top:646px">Untitled image.jpeg</div>

<div class="tile" style="left:78px;top:669px"><svg viewBox="0 0 108 61"><use href="#books"/><rect x="7" y="6" width="22" height="2.500" fill="#f0c924"/><rect x="80" y="6" width="22" height="2.500" fill="#f0c924"/><rect x="41" y="2" width="26" height="8" fill="#fff"/><text x="54" y="8" font-size="5" font-weight="700" text-anchor="middle" fill="#333" font-family="Liberation Sans,sans-serif">HOW TO</text><text x="54" y="18" font-size="10" font-weight="700" font-style="italic" text-anchor="middle" fill="#efbf1a" stroke="#7a4a10" stroke-width=".3" font-family="Liberation Serif,serif">Learn English</text></svg></div>
<div class="lb" style="left:80px;top:734px">Untitled image.jpeg</div>
<div class="tile" style="left:193px;top:669px"><svg viewBox="0 0 108 61"><use href="#books"/><rect x="7" y="6" width="22" height="2.500" fill="#f0c924"/><rect x="80" y="6" width="22" height="2.500" fill="#f0c924"/><rect x="41" y="5" width="26" height="7" fill="#fff"/><text x="54" y="10.500" font-size="5" font-weight="700" text-anchor="middle" fill="#333" font-family="Liberation Sans,sans-serif">HOW TO</text><text x="54" y="20" font-size="10" font-weight="700" font-style="italic" text-anchor="middle" fill="#efbf1a" stroke="#7a4a10" stroke-width=".3" font-family="Liberation Serif,serif">Learn English</text></svg></div>
<div class="lb" style="left:195px;top:734px">Untitled image.jpeg</div>

<div class="tile" style="left:78px;top:756px"><svg viewBox="0 0 108 61"><rect x="11" width="86" height="61" fill="#c8cac6"/><rect x="14" y="0" width="56" height="11" fill="#7f8a6a" opacity=".7"/><rect x="11" y="49" width="86" height="12" fill="#b5a78e"/><rect x="26" y="36" width="30" height="4" fill="#dedcd0"/><rect x="19" y="40" width="32" height="4" fill="#cac2b0" stroke="#484a52" stroke-width=".8"/><rect x="18" y="44" width="34" height="5" fill="#cac2b0" stroke="#484a52" stroke-width=".8"/><circle cx="38" cy="30" r="5.500" fill="#d8402c"/><rect x="84" y="33" width="7" height="6" fill="#d8544a"/><rect x="82" y="39" width="7" height="7" fill="#e88a48"/><rect x="84" y="46" width="8" height="7" fill="#d8d048"/></svg></div>
<div class="lb" style="left:80px;top:821px">element5-digital-...</div>
<div class="tile" style="left:193px;top:756px"><svg viewBox="0 0 108 61"><use href="#dial"/><text x="54" y="28" font-size="6.500" font-weight="700" fill="#f6ece2" text-anchor="middle" font-family="Liberation Sans,sans-serif">Dialogue breaks barriers,</text><text x="54" y="35" font-size="6.500" font-weight="700" fill="#f6ece2" text-anchor="middle" font-family="Liberation Sans,sans-serif">empathy builds bridges.</text></svg></div>
<div class="lb" style="left:195px;top:821px">image_Pippit_202...</div>

<div class="tile" style="left:78px;top:844px"><svg viewBox="0 0 108 61"><use href="#dial"/><text x="54" y="28" font-size="6.500" font-weight="700" fill="#f6ece2" text-anchor="middle" font-family="Liberation Sans,sans-serif">Dialogue breaks barriers,</text><text x="54" y="35" font-size="6.500" font-weight="700" fill="#f6ece2" text-anchor="middle" font-family="Liberation Sans,sans-serif">empathy builds bridges.</text></svg></div>
<div class="lb" style="left:80px;top:909px">image_Pippit_202...</div>
<div class="tile" style="left:193px;top:844px"><svg viewBox="0 0 108 61"><rect width="108" height="61" fill="#e8d9b8"/><rect x="54" width="54" height="61" fill="#8a7d5a"/><rect x="0" y="46" width="54" height="5" fill="#7a3a20"/><rect x="6" y="30" width="40" height="12" fill="#c9b898"/><path d="M60 61 66 38h26l10 23Z" fill="#e3992a"/><ellipse cx="78" cy="24" rx="11" ry="13" fill="#eab48c"/><path d="M66 22c-2-16 26-20 27 0-5-8-20-8-27 0Z" fill="#6a3a1e"/><circle cx="73" cy="25" r="3.500" fill="none" stroke="#4a3020"/><circle cx="83" cy="25" r="3.500" fill="none" stroke="#4a3020"/><text x="6" y="15" font-size="9.500" font-weight="700" fill="#6e2c12" font-family="Liberation Sans,sans-serif" textLength="41" lengthAdjust="spacingAndGlyphs">MASTERING</text><text x="6" y="26" font-size="9.500" font-weight="700" fill="#6e2c12" font-family="Liberation Sans,sans-serif" textLength="30" lengthAdjust="spacingAndGlyphs">SCIENCE</text></svg></div>
<div class="lb" style="left:195px;top:909px">Untitled image.jpeg</div>

<div class="tile" style="left:78px;top:932px;height:16px;border-radius:8px 8px 0 0"><svg viewBox="0 0 108 61"><rect width="108" height="61" fill="#ecc6ab"/><ellipse cx="12" cy="8" rx="12" ry="12" fill="#b77a54"/><rect x="80" y="4" width="20" height="7" fill="#fff"/></svg></div>
<div class="tile" style="left:193px;top:932px;height:16px;border-radius:8px 8px 0 0"><svg viewBox="0 0 108 61"><rect width="108" height="61" fill="#ecc6ab"/><ellipse cx="12" cy="8" rx="12" ry="12" fill="#b77a54"/><rect x="100" width="8" height="61" fill="#35363b"/></svg></div>

<!-- collapse handle -->
<div class="a" style="left:315px;top:452px;width:7px;height:46px;background:#1f2023;border-radius:0 5px 5px 0"></div>
<svg class="i" style="left:315px;top:470px;color:#8f9095;stroke-width:1" width="6" height="10" viewBox="0 0 6 10"><path d="M4.500 1 1.500 5l3 4"/></svg>

<!-- timeline toolbar -->
<div class="a" style="left:315px;top:750px;width:1547px;height:198px;background:#fff"></div>
<div class="a" style="left:315px;top:794px;width:1547px;height:1px;background:#e6e8eb"></div>
<svg class="i" style="left:335px;top:764px;color:#23262b;stroke-width:1.500" width="14" height="16" viewBox="0 0 14 16"><path d="M2 1.500h2c1 0 2 .7 2 2v9c0 1.300-1 2-2 2H2M12 1.500h-2c-1 0-2 .7-2 2v9c0 1.300 1 2 2 2h2"/></svg>
<svg class="i" style="left:371px;top:764px;color:#23262b;stroke-width:1.500" width="14" height="16" viewBox="0 0 14 16"><path d="M1 4h12M3 4l1 10.500h6L11 4M5.500 4V1.500h3V4"/></svg>
<svg class="i" style="left:406px;top:764px;color:#23262b;stroke-width:1.500" width="16" height="15" viewBox="0 0 16 15"><path d="M6.500 1.500v12H1ZM9.500 1.500v12H15Z"/></svg>
<svg class="i" style="left:442px;top:764px;color:#23262b;stroke-width:1.500" width="14" height="15" viewBox="0 0 14 15"><path d="M7 1v9M3 6.500 7 10.500l4-4M1 14h12"/></svg>
<svg class="i" style="left:461px;top:770px;color:#6a6e74;stroke-width:1.300" width="9" height="6" viewBox="0 0 9 6"><path d="m1 1 3.500 3.500L8 1"/></svg>
<div class="a" style="left:1023px;top:761px;width:22px;height:22px;border-radius:50%;background:#0e0e12;box-shadow:0 3px 6px rgba(0,0,0,.25)"></div>
<svg class="a" style="left:1030px;top:767px" width="9" height="10" viewBox="0 0 9 10"><path d="M1 .8 8 5l-7 4.200Z" fill="#fff"/></svg>
<div class="a" style="left:1054px;top:764px;font-size:12px;font-weight:700;color:#1c1e22;line-height:16px">00:00:17</div>
<div class="a" style="left:1108px;top:766px;width:1px;height:12px;background:#aeb3b9"></div>
<div class="a" style="left:1115px;top:764px;font-size:12px;color:#9ba0a7;line-height:16px">00:31:09</div>

<svg class="i" style="left:1557px;top:763px;color:#23262b;stroke-width:1.500" width="13" height="18" viewBox="0 0 13 18"><rect x="4" y="1" width="5" height="10" rx="2.500"/><path d="M1.500 8.500a5 5 0 0 0 10 0M6.500 13.500V17"/></svg>
<div class="a" style="left:1581px;top:757px;width:30px;height:30px;background:#dff7fb;border-radius:7px"></div>
<svg class="a" style="left:1588px;top:763px" width="16" height="18" viewBox="0 0 16 18"><rect x="1" y="5" width="14" height="8" rx="2" fill="#1cc3e0"/><rect x="7" y="7" width="2" height="4" fill="#fff"/><path d="M4 1v2M8 1v2M12 1v2M4 15v2M8 15v2M12 15v2" stroke="#1cc3e0" stroke-width="1.200"/></svg>
<svg class="i" style="left:1620px;top:763px;color:#23262b;stroke-width:1.500" width="16" height="18" viewBox="0 0 16 18"><path d="M8 1v16M7 5H2v7h5M9 5h5v7H9"/></svg>
<svg class="i" style="left:1653px;top:764px;color:#23262b;stroke-width:1.500" width="15" height="15" viewBox="0 0 15 15"><circle cx="7.500" cy="7.500" r="6.500"/><path d="M4.500 7.500h6"/></svg>
<div class="a" style="left:1676.500px;top:771px;width:77px;height:2px;background:#cfd3d8"></div>
<div class="a" style="left:1676.500px;top:770.500px;width:11px;height:3px;background:#70757c"></div>
<svg class="i" style="left:1761.500px;top:764px;color:#23262b;stroke-width:1.500" width="15" height="15" viewBox="0 0 15 15"><circle cx="7.500" cy="7.500" r="6.500"/><path d="M4.500 7.500h6M7.500 4.500v6"/></svg>
<div class="a" style="left:1790px;top:764px;width:1px;height:16px;background:#e3e6e9"></div>
<svg class="i" style="left:1806px;top:765px;color:#23262b;stroke-width:1.600" width="15" height="15" viewBox="0 0 15 15"><path d="M1 4.500V2a1 1 0 0 1 1-1h2.500M10.500 1H13a1 1 0 0 1 1 1v2.500M14 10.500V13a1 1 0 0 1-1 1h-2.500M4.500 14H2a1 1 0 0 1-1-1v-2.500"/></svg>
<svg class="i" style="left:1835px;top:762px;color:#23262b;stroke-width:1.500" width="14" height="18" viewBox="0 0 14 18"><rect x="1" y="1" width="12" height="9" rx="1.500"/><path d="M7 10v3M4.500 13.500 7 16.500l2.500-3"/></svg>

<!-- ruler -->
<div class="a" style="left:414px;top:800px;width:1448px;height:3px;background:repeating-linear-gradient(90deg,#d8dbdf 0 1px,transparent 1px 18.55px)"></div>
<div class="mj" style="left:414px"></div><div class="tm" style="left:419px">00:00</div>
<div class="mj" style="left:600px"></div><div class="tm" style="left:605px">00:05</div>
<div class="mj" style="left:785px"></div><div class="tm" style="left:790px">00:10</div>
<div class="mj" style="left:971px"></div><div class="tm" style="left:976px">00:15</div>
<div class="mj" style="left:1156px"></div><div class="tm" style="left:1161px">00:20</div>
<div class="mj" style="left:1342px"></div><div class="tm" style="left:1347px">00:25</div>
<div class="mj" style="left:1528px"></div><div class="tm" style="left:1533px">00:30</div>
<div class="mj" style="left:1713px"></div><div class="tm" style="left:1718px">00:35</div>

<!-- tracks -->
<svg class="i" style="left:330px;top:863px;color:#2a2d32;stroke-width:1.300" width="14" height="14" viewBox="0 0 14 14"><path d="M1 5v4h2.500L8 12.500v-11L3.500 5H1ZM10.500 5c.8 1 .8 3 0 4M12.500 4c1 1.500 1 4.500 0 6"/></svg>
<svg class="i" style="left:330px;top:909px;color:#2a2d32;stroke-width:1.300" width="14" height="14" viewBox="0 0 14 14"><path d="M1 5v4h2.500L8 12.500v-11L3.500 5H1ZM10.500 5c.8 1 .8 3 0 4M12.500 4c1 1.500 1 4.500 0 6"/></svg>
<div class="a" style="left:364px;top:894px;width:45px;height:45px;background:#eff2f5;border:1px dashed #d2d6da;border-radius:5px"></div>
<svg class="i" style="left:379px;top:909px;color:#23262b;stroke-width:1.200" width="14" height="14" viewBox="0 0 14 14"><path d="M3 10 9.500 2.500 12 5 5.500 12H2.500L3 10ZM6 13h7"/></svg>

<div class="a" style="left:415px;top:823px;width:1443px;height:26px;background:#eff2f5;border-radius:2px"></div>
<div class="a" style="left:415px;top:855px;width:1443px;height:32px;background:#dfe3e6"></div>
<div class="a" style="left:415px;top:894px;width:1443px;height:45px;background:#eff2f5"></div>

<div class="cap" style="left:415px;width:152px"><span style="width:122px">For dry hands, you absol</span></div>
<div class="cap" style="left:570px;width:132px"><span style="width:102px">It is specially formula</span></div>
<div class="cap" style="left:704px;width:110.500px"><span style="width:81px">leaving your han</span></div>
<div class="cap" style="left:817px;width:65px"><span style="width:36px">Infused</span></div>
<div class="cap" style="left:884px;width:121px"><span style="width:92px">this cream absorb</span></div>
<div class="cap" style="left:1007px;width:86.500px"><span style="width:58px">making it p</span></div>
<div class="cap" style="left:1095px;width:140px"><span style="width:110px">Just a tiny amount goe</span></div>
<div class="cap" style="left:1237px;width:62px"><span style="width:33px">Your h</span></div>
<div class="cap" style="left:1302px;width:71px"><span style="width:43px">especial</span></div>
<div class="cap" style="left:1375px;width:118.500px"><span style="width:90px">Trust me, once yo</span></div>
<div class="cap" style="left:1496px;width:80px"><span style="width:50px">Get your h</span></div>

<svg class="a" style="left:0;top:0;width:1862px;height:948px;pointer-events:none" viewBox="0 0 1862 948">
<defs>
<filter id="fs" x="0" y="0" width="100%" height="100%"><feGaussianBlur stdDeviation=".7"/></filter>
<pattern id="p2" patternUnits="userSpaceOnUse" x="416" y="855" width="18" height="32">
<rect width="18" height="32" fill="#c6cbcb"/><rect width="4" height="32" fill="#d8dad9"/><rect y="25" width="18" height="7" fill="#e0d8cc"/>
<path d="M4.500 13C4.500 7 6 4 9 4s4.500 3 4.500 9l1 3H3.500Z" fill="#3e3030"/><ellipse cx="9" cy="9.500" rx="2.700" ry="3.700" fill="#d8ae9c"/>
<path d="M2 28c0-7 3-11 7-11s7 4 7 11Z" fill="#c9ad92"/><rect x="5" y="18" width="8" height="8" fill="#dcd6c8"/>
<path d="M0 29h18v3H0Z" fill="#7c5f4c" opacity=".45"/>
</pattern>
<pattern id="p3" patternUnits="userSpaceOnUse" x="415" y="894" width="29" height="45">
<rect width="29" height="45" fill="#324a2a"/><circle cx="5" cy="6" r="3.500" fill="#b6c5ac"/><circle cx="22" cy="12" r="3" fill="#a0b294"/><circle cx="26" cy="3" r="2.500" fill="#7f9a72"/><circle cx="6" cy="20" r="2.500" fill="#8ba080"/>
<rect y="27" width="29" height="18" fill="#a39d7f"/>
<path d="M9 0h8l1 17H10Z" fill="#e2d9c2"/>
<path d="M16 8c5 3 9 12 11 20l-6 3-6-16Z" fill="#c98a58"/>
<path d="M2 33c6-1 17 1 26 7l-1 3C20 40 8 38 2 35Z" fill="#a8693f"/>
<path d="M0 44h29" stroke="#6e6650"/>
<circle cx="7" cy="41" r="1.200" fill="#ece8dc"/><circle cx="16" cy="41" r="1.200" fill="#ece8dc"/>
</pattern>
</defs>
<g filter="url(#fs)">
<rect x="817" y="855" width="418" height="32" rx="5" fill="url(#p2)"/>
<rect x="1237" y="855" width="256.500" height="32" rx="5" fill="url(#p2)"/>
<rect x="1496" y="855" width="80" height="32" rx="5" fill="url(#p2)"/>
<rect x="416" y="856" width="398" height="31" rx="5" fill="url(#p2)"/>
<rect x="415" y="894" width="109" height="45" rx="6" fill="url(#p3)"/>
<rect x="526" y="894" width="110" height="45" rx="6" fill="url(#p3)"/>
<rect x="638" y="894" width="109" height="45" rx="6" fill="url(#p3)"/>
<rect x="749" y="894" width="65" height="45" rx="6" fill="url(#p3)"/>
<rect x="817" y="894" width="109" height="45" rx="6" fill="url(#p3)"/>
<rect x="928" y="894" width="110" height="45" rx="6" fill="url(#p3)"/>
<rect x="1040" y="894" width="109" height="45" rx="6" fill="url(#p3)"/>
<rect x="1152" y="894" width="83" height="45" rx="6" fill="url(#p3)"/>
<rect x="1237" y="894" width="109" height="45" rx="6" fill="url(#p3)"/>
<rect x="1349" y="894" width="144" height="45" rx="6" fill="url(#p3)"/>
<rect x="1496" y="894" width="80" height="45" rx="6" fill="url(#p3)"/>
</g>
<rect x="416" y="856" width="398" height="31" rx="5" fill="none" stroke="#1fc4dc" stroke-width="2"/>
<rect x="418" y="866" width="2" height="11" rx="1" fill="#1a1c20"/><rect x="810" y="866" width="2" height="11" rx="1" fill="#1a1c20"/>
<rect x="415" y="945" width="1161" height="3" fill="#72c8b8"/>
<rect x="415" y="945" width="30" height="3" fill="#6a6a5e"/><rect x="1540" y="945" width="36" height="3" fill="#6a6a5e"/>
</svg>
<div class="a" style="left:421px;top:860px;width:253px;height:14px;background:rgba(50,50,54,.6);border-radius:3px;color:#fff;font-size:11.500px;line-height:14px;padding-left:3px;white-space:nowrap;overflow:hidden">video_09fc515afe248b2b9e64e3aaalb5b67l.mp4</div>
<div class="a" style="left:676px;top:860px;width:51px;height:14px;background:rgba(50,50,54,.6);border-radius:3px;color:#fff;font-size:11.500px;line-height:14px;text-align:center;white-space:nowrap">00:10:25</div>

<!-- playhead -->
<div class="a" style="left:434.500px;top:806px;width:1px;height:142px;background:#111"></div>
<svg class="a" style="left:430px;top:796px" width="11" height="15" viewBox="0 0 11 15"><path d="M1 2.500a1.500 1.500 0 0 1 1.500-1.500h6a1.500 1.500 0 0 1 1.500 1.500V10l-4.500 4L1 10Z" fill="#fff" stroke="#111" stroke-width="1.500"/></svg>

</body></html>
